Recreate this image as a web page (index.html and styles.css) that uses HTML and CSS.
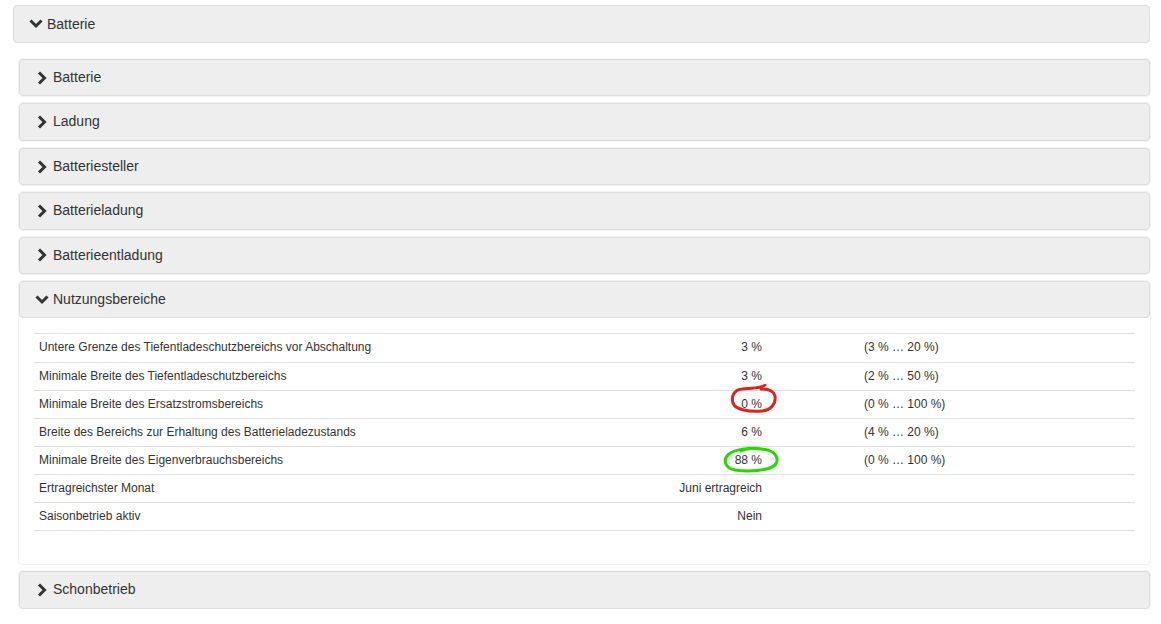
FILE: index.html
```html
<!DOCTYPE html>
<html lang="de">
<head>
    <meta charset="UTF-8">
    <meta name="viewport" content="width=device-width, initial-scale=1.0">
    <title>Batterie - Parameter</title>
    <link rel="stylesheet" href="styles.css">
</head>
<body>
    <div class="panel outer">
        <div class="panel-heading">
            <svg class="chevron" width="14" height="10" viewBox="0 0 14 10"><polyline points="1.5,1.5 7,7 12.5,1.5"/></svg>
            <span>Batterie</span>
        </div>
        <div class="outer-body">
            <div class="panel">
                <div class="panel-heading">
                    <svg class="chevron" width="14" height="14" viewBox="0 0 14 14"><polyline points="4,1.5 9.5,7 4,12.5"/></svg>
                    <span>Batterie</span>
                </div>
            </div>
            <div class="panel">
                <div class="panel-heading">
                    <svg class="chevron" width="14" height="14" viewBox="0 0 14 14"><polyline points="4,1.5 9.5,7 4,12.5"/></svg>
                    <span>Ladung</span>
                </div>
            </div>
            <div class="panel">
                <div class="panel-heading">
                    <svg class="chevron" width="14" height="14" viewBox="0 0 14 14"><polyline points="4,1.5 9.5,7 4,12.5"/></svg>
                    <span>Batteriesteller</span>
                </div>
            </div>
            <div class="panel">
                <div class="panel-heading">
                    <svg class="chevron" width="14" height="14" viewBox="0 0 14 14"><polyline points="4,1.5 9.5,7 4,12.5"/></svg>
                    <span>Batterieladung</span>
                </div>
            </div>
            <div class="panel">
                <div class="panel-heading">
                    <svg class="chevron" width="14" height="14" viewBox="0 0 14 14"><polyline points="4,1.5 9.5,7 4,12.5"/></svg>
                    <span>Batterieentladung</span>
                </div>
            </div>
            <div class="panel open">
                <div class="panel-heading">
                    <svg class="chevron" width="14" height="10" viewBox="0 0 14 10"><polyline points="1.5,1.5 7,7 12.5,1.5"/></svg>
                    <span>Nutzungsbereiche</span>
                </div>
                <div class="panel-body">
                    <table class="params">
                        <colgroup>
                            <col class="col-label">
                            <col class="col-value">
                            <col class="col-unit">
                            <col>
                        </colgroup>
                        <tr><td>Untere Grenze des Tiefentladeschutzbereichs vor Abschaltung</td><td class="value">3 %</td><td></td><td>(3 % … 20 %)</td></tr>
                        <tr><td>Minimale Breite des Tiefentladeschutzbereichs</td><td class="value">3 %</td><td></td><td>(2 % … 50 %)</td></tr>
                        <tr><td>Minimale Breite des Ersatzstromsbereichs</td><td class="value">0 %</td><td></td><td>(0 % … 100 %)</td></tr>
                        <tr><td>Breite des Bereichs zur Erhaltung des Batterieladezustands</td><td class="value">6 %</td><td></td><td>(4 % … 20 %)</td></tr>
                        <tr><td>Minimale Breite des Eigenverbrauchsbereichs</td><td class="value">88 %</td><td></td><td>(0 % … 100 %)</td></tr>
                        <tr><td>Ertragreichster Monat</td><td class="value">Juni ertragreich</td><td></td><td></td></tr>
                        <tr><td>Saisonbetrieb aktiv</td><td class="value">Nein</td><td></td><td></td></tr>
                    </table>
                    <!-- hand-drawn markers over the values -->
                    <svg class="mark mark-red" width="48" height="30" viewBox="0 0 48 30">
                        <path d="M35,1 C33,4 22,4 12,5 C4,6 1,12 3,19 C5,26 20,28 32,27 C42,26 46,19 45,12 C44,7 39,5 31,5"/>
                    </svg>
                    <svg class="mark mark-green" width="58" height="28" viewBox="0 0 58 28">
                        <path d="M40,3 C30,1 13,3 7,8 C1,13 2,22 13,24 C26,26 46,25 53,19 C58,13 54,4 39,3 C31,2 23,3 19,5"/>
                    </svg>
                </div>
            </div>
            <div class="panel">
                <div class="panel-heading">
                    <svg class="chevron" width="14" height="14" viewBox="0 0 14 14"><polyline points="4,1.5 9.5,7 4,12.5"/></svg>
                    <span>Schonbetrieb</span>
                </div>
            </div>
        </div>
    </div>
</body>
</html>
```

FILE: styles.css
```css
body {
    margin: 0;
    padding: 5px 11px 0 13px;
    font-family: "Liberation Sans", Arial, sans-serif;
    color: #333;
    background-color: #fff;
    overflow: hidden;
}

.panel {
    border-radius: 4px;
    box-shadow: 0 0 0 1px #f2f2f2;
    background-color: #fff;
}

.panel + .panel {
    margin-top: 7px;
}

.panel-heading {
    display: flex;
    align-items: center;
    gap: 4px;
    padding: 8px 15px;
    font-size: 14px;
    line-height: 19.4px;
    background-color: #eee;
    border: 1px solid #ddd;
    border-radius: 4px;
}

.outer {
    box-shadow: none;
}

.outer > .panel-heading {
    line-height: 20px;
}

.outer-body {
    padding: 16px 0 0 6px;
}

.chevron {
    flex: none;
}

.chevron polyline {
    fill: none;
    stroke: #333;
    stroke-width: 3;
}

.panel-body {
    position: relative;
    padding: 15px;
}

.params {
    width: 100%;
    border-collapse: collapse;
    margin-bottom: 18px;
    font-size: 12px;
    line-height: 17.1px;
}

.params td {
    padding: 5px;
    border-top: 1px solid #ddd;
    white-space: nowrap;
}

.params tr:last-child td {
    border-bottom: 1px solid #ddd;
}

.col-label {
    width: 586px;
}

.col-value {
    width: 147px;
}

.col-unit {
    width: 92px;
}

.params .value {
    text-align: right;
}

.mark {
    position: absolute;
}

.mark path {
    fill: none;
    stroke-width: 3;
    stroke-linecap: round;
}

.mark-red {
    left: 711px;
    top: 66px;
}

.mark-red path {
    stroke: #e3201c;
}

.mark-green {
    left: 703px;
    top: 128px;
}

.mark-green path {
    stroke: #27d800;
}
```
